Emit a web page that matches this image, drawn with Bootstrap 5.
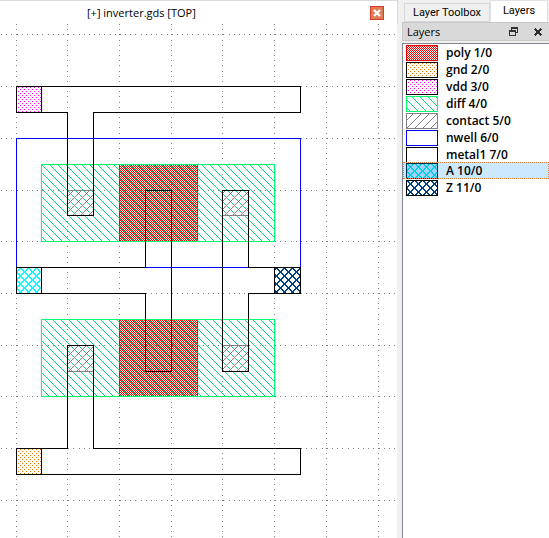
<!DOCTYPE html>
<html lang="en">
<head>
<meta charset="utf-8">
<meta name="viewport" content="width=device-width, initial-scale=1">
<title>inverter.gds</title>
<link href="https://cdn.jsdelivr.net/npm/bootstrap@5.3.0/dist/css/bootstrap.min.css" rel="stylesheet">
<style>
body{font-family:"Open Sans","Noto Sans",sans-serif;font-size:11px;line-height:16px;color:#000;background:#f0f0f0}
.view-pane{border-top:1px solid #d9d9d9}
.view-head{height:23px;padding:0 13px 0 87px;border-right:1px solid #d9d9d9}
.view-close{width:14px;height:14px}
.canvas{min-height:0;margin-right:1px}
.side{width:151px;padding-left:4px}
.nav-tabs{height:22px;padding-left:2px;--bs-nav-tabs-border-width:0}
.nav-tabs .nav-link{font-family:Roboto,"Open Sans",sans-serif;font-size:11px;line-height:18px;color:#000;border:1px solid #d9d9d9;border-radius:0;margin:0}
.nav-tabs .nav-link.active{height:22px;background:#fff;width:58px}
.nav-tabs .off{height:19px;background:#f0f0f0;width:86px}
.dock{height:19px;padding:0 7px 0 4px;line-height:18px;background:#d9d9d9;border:1px solid #c8c8c8;border-right:0}
.layers{margin-top:2px;border:1px solid #828790;border-right:0;border-bottom:0;background:#fff}
.layers .list-group-item{height:17px;padding:0 0 0 3px;font-size:12px;line-height:16px;font-weight:600;color:#000;background:#fff;border:0;gap:8px}
.layers .list-group-item.active{background:#cce8ff;outline:1px dotted #e88034;outline-offset:-1px}
.tile{width:32px;height:16px;flex:none}
svg{shape-rendering:crispEdges;display:block}
</style>
</head>
<body>
<main class="d-flex vh-100 overflow-hidden">
<section class="view-pane d-flex flex-column flex-grow-1 overflow-hidden">
<header class="view-head d-flex align-items-center justify-content-between bg-white">
<span class="text-nowrap">[+] inverter.gds [TOP]</span>
<button class="view-close btn p-0 border-0" aria-label="Close view"><svg width="14" height="14" viewBox="0 0 14 14"><rect x=".5" y=".5" width="13" height="13" rx="1" fill="#df7b55" stroke="#d83d28"/><path d="M4 4l6 6M10 4l-6 6" stroke="#fff" stroke-width="2.4" shape-rendering="auto"/></svg></button>
</header>
<div class="canvas flex-grow-1 bg-white">
<svg width="100%" height="100%" role="img" aria-label="Inverter layout">
<defs>
<pattern id="pPoly" width="2" height="2" patternUnits="userSpaceOnUse"><path fill="#f00000" d="M0 0h1v1h-1zM1 1h1v1h-1z"/></pattern>
<pattern id="pPolyTile" x="1" width="2" height="2" patternUnits="userSpaceOnUse"><path fill="#f00000" d="M0 0h1v1h-1zM1 1h1v1h-1z"/></pattern>
<pattern id="pDiff" x="5" width="8" height="8" patternUnits="userSpaceOnUse"><path fill="#10e070" d="M0 0h1v1h-1zM1 1h1v1h-1zM2 2h1v1h-1zM3 3h1v1h-1zM4 4h1v1h-1zM5 5h1v1h-1zM6 6h1v1h-1zM7 7h1v1h-1z"/></pattern>
<pattern id="pCont" width="8" height="8" patternUnits="userSpaceOnUse"><path fill="#808080" d="M7 0h1v1h-1zM6 1h1v1h-1zM5 2h1v1h-1zM4 3h1v1h-1zM3 4h1v1h-1zM2 5h1v1h-1zM1 6h1v1h-1zM0 7h1v1h-1z"/></pattern>
<pattern id="pGnd" width="4" height="4" patternUnits="userSpaceOnUse"><path fill="#f07800" d="M0 1h1v1h-1zM2 3h1v1h-1z"/></pattern>
<pattern id="pVdd" width="4" height="4" patternUnits="userSpaceOnUse"><path fill="#f0f" d="M0 1h1v1h-1zM2 3h1v1h-1z"/></pattern>
<path id="mesh" d="M0 0h2v1h-2zM1 1h2v1h-2zM2 2h2v1h-2zM3 3h3v1h-3zM3 4h3v1h-3zM2 5h2v1h-2zM5 5h2v1h-2zM1 6h2v1h-2zM6 6h2v1h-2zM0 7h2v1h-2zM7 7h1v1h-1zM7 0h1v1h-1zM6 1h2v1h-2zM5 2h2v1h-2z"/>
<pattern id="pA" width="8" height="8" patternUnits="userSpaceOnUse"><use href="#mesh" fill="#0ff"/></pattern>
<pattern id="pASel" width="8" height="8" patternUnits="userSpaceOnUse"><use href="#mesh" fill="#00d0f0"/></pattern>
<pattern id="pZ" width="8" height="8" patternUnits="userSpaceOnUse"><use href="#mesh" fill="#004080"/></pattern>
</defs>
<g transform="translate(0 -24)">
<g stroke="#808080" stroke-dasharray="1 4.172">
<path d="M16.5 24V2000M67.5 24V2000M119.5 24V2000M171.5 24V2000M222.5 24V2000M274.5 24V2000M326.5 24V2000M378.5 24V2000"/>
<path d="M1 34.5H2000M1 86.5H2000M1 138.5H2000M1 190.5H2000M1 241.5H2000M1 293.5H2000M1 345.5H2000M1 396.5H2000M1 448.5H2000M1 500.5H2000"/>
</g>
<g fill="url(#pPoly)" stroke="#f00000"><path d="M119.5 164.5h78v77h-78zM119.5 319.5h78v77h-78z"/></g>
<g fill="url(#pDiff)" stroke="#00ff6e"><path d="M41.5 164.5h233v77h-233zM41.5 319.5h233v77h-233z"/></g>
<g fill="url(#pCont)" stroke="#808080"><path d="M67.5 190.5h26v25h-26zM222.5 190.5h26v25h-26zM67.5 345.5h26v26h-26zM222.5 345.5h26v26h-26z"/></g>
<path fill="none" stroke="#00f" d="M16.5 138.5h284v129h-284z"/>
<g stroke="#000"><path fill="url(#pVdd)" d="M16.5 86.5h25v26h-25z"/><path fill="url(#pGnd)" d="M16.5 448.5h25v26h-25z"/><path fill="url(#pA)" d="M16.5 267.5h25v26h-25z"/><path fill="url(#pZ)" d="M274.5 267.5h26v26h-26z"/></g>
<g fill="none" stroke="#000">
<path d="M16.5 86.5H300.5V112.5H93.5V215.5H67.5V112.5H16.5z"/>
<path d="M16.5 267.5H145.5V190.5H171.5V371.5H145.5V293.5H16.5z"/>
<path d="M222.5 190.5H248.5V267.5H300.5V293.5H248.5V371.5H222.5z"/>
<path d="M67.5 345.5H93.5V448.5H300.5V474.5H16.5V448.5H67.5z"/>
</g>
</g>
</svg>
</div>
</section>
<aside class="side d-flex flex-column flex-shrink-0">
<div class="nav nav-tabs flex-nowrap align-items-end border-0" role="tablist">
<button class="nav-link off p-0 text-nowrap" role="tab" aria-selected="false">Layer Toolbox</button>
<button class="nav-link active p-0 text-nowrap" role="tab" aria-selected="true">Layers</button>
</div>
<header class="dock d-flex align-items-center">
<span class="me-auto">Layers</span>
<button class="btn p-0 border-0 me-3" aria-label="Float"><svg width="9" height="9"><path d="M2.5 3V.5h6v5H6M2 1.5h7M.5 3.5h6v5h-6zM0 4.5h7" fill="none" stroke="#333"/></svg></button>
<button class="btn p-0 border-0" aria-label="Close panel"><svg width="8" height="8" shape-rendering="auto"><path d="M.8.8l6.4 6.4M7.2.8L.8 7.2" stroke="#333" stroke-width="1.8"/></svg></button>
</header>
<div class="layers list-group rounded-0 flex-grow-1">
<button class="list-group-item list-group-item-action d-flex align-items-end"><svg class="tile"><rect x=".5" y=".5" width="31" height="15" fill="url(#pPolyTile)" stroke="#f00000"/></svg>poly 1/0</button>
<button class="list-group-item list-group-item-action d-flex align-items-end"><svg class="tile"><rect x=".5" y=".5" width="31" height="15" fill="url(#pGnd)" stroke="#000"/></svg>gnd 2/0</button>
<button class="list-group-item list-group-item-action d-flex align-items-end"><svg class="tile"><rect x=".5" y=".5" width="31" height="15" fill="url(#pVdd)" stroke="#000"/></svg>vdd 3/0</button>
<button class="list-group-item list-group-item-action d-flex align-items-end"><svg class="tile"><rect x=".5" y=".5" width="31" height="15" fill="url(#pDiff)" stroke="#00ff6e"/></svg>diff 4/0</button>
<button class="list-group-item list-group-item-action d-flex align-items-end"><svg class="tile"><rect x=".5" y=".5" width="31" height="15" fill="url(#pCont)" stroke="#808080"/></svg>contact 5/0</button>
<button class="list-group-item list-group-item-action d-flex align-items-end"><svg class="tile"><rect x=".5" y=".5" width="31" height="15" fill="#fff" stroke="#00f"/></svg>nwell 6/0</button>
<button class="list-group-item list-group-item-action d-flex align-items-end"><svg class="tile"><rect x=".5" y=".5" width="31" height="15" fill="#fff" stroke="#000"/></svg>metal1 7/0</button>
<button class="list-group-item list-group-item-action active d-flex align-items-end"><svg class="tile"><path fill="#a6d3f5" d="M0 0h32v16H0z"/><rect x=".5" y=".5" width="31" height="15" fill="url(#pASel)" stroke="#002b4d"/></svg>A 10/0</button>
<button class="list-group-item list-group-item-action d-flex align-items-end"><svg class="tile"><rect x=".5" y=".5" width="31" height="15" fill="url(#pZ)" stroke="#000"/></svg>Z 11/0</button>
</div>
</aside>
</main>
<script src="https://cdn.jsdelivr.net/npm/bootstrap@5.3.0/dist/js/bootstrap.bundle.min.js"></script>
</body>
</html>
